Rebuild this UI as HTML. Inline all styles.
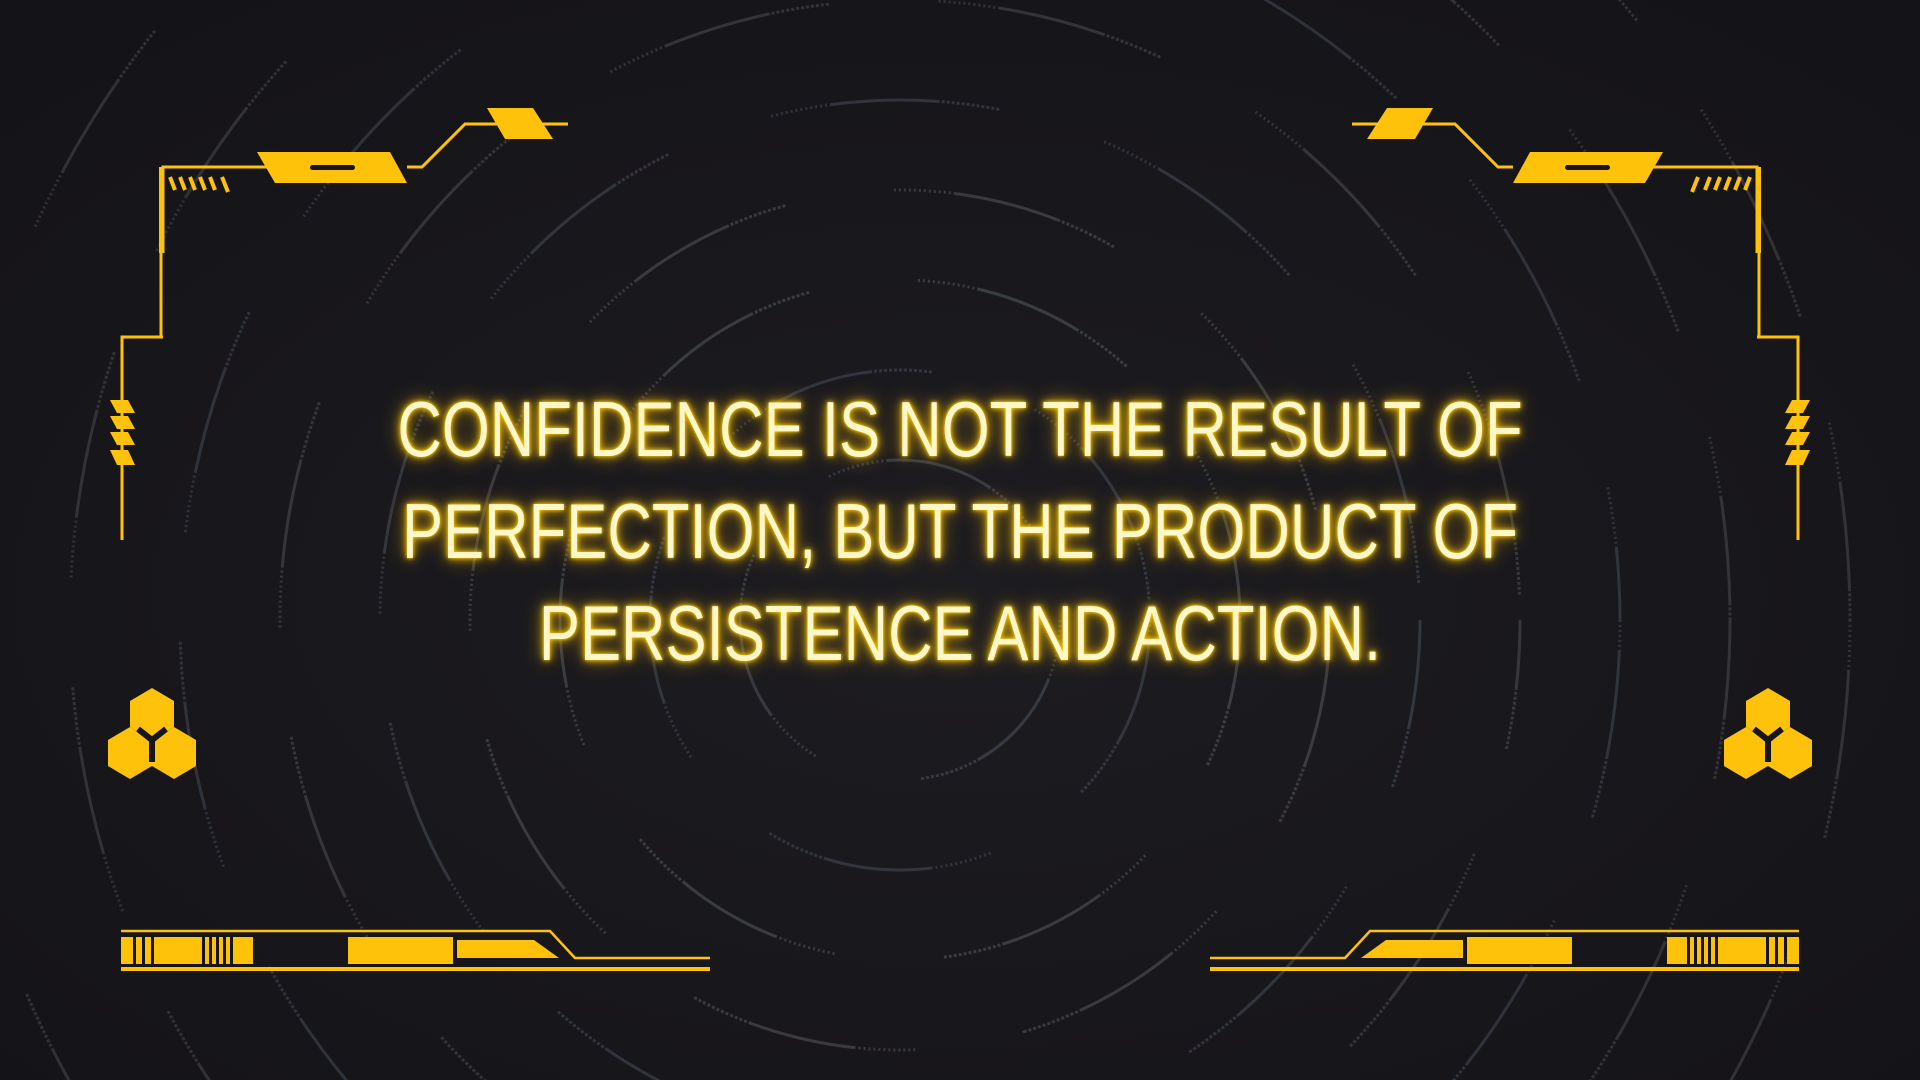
<!DOCTYPE html>
<html><head><meta charset="utf-8"><style>
html,body{margin:0;padding:0;width:1920px;height:1080px;overflow:hidden;background:#161519;position:relative;}
svg{display:block}
.q{position:absolute;left:0;top:0;width:1920px;text-align:center;font-family:"Liberation Sans",sans-serif;font-size:78px;line-height:102px;color:#fff7c8;transform:scaleX(0.79);transform-origin:960px 0;
text-shadow:0 0 4px #ffd400,0 0 10px #ffc400,0 0 22px rgba(255,190,0,.7);}
</style></head><body>
<svg width="1920" height="1080" style="position:absolute;left:0;top:0">
<defs><radialGradient id="bg" cx="50%" cy="55%" r="70%"><stop offset="0" stop-color="#1d1c20"/><stop offset="1" stop-color="#141317"/></radialGradient></defs>
<rect width="1920" height="1080" fill="url(#bg)"/>
<g fill="none" opacity="0.25" stroke-dasharray="2 3 2 3 2 3 2 3 2 3 2 3 2 3 2 3 2 3 2 3 2 3 2 3 110">
<circle cx="900" cy="620" r="160" stroke="#8a9ab0" stroke-width="3"/>
<circle cx="900" cy="620" r="250" stroke="#7a8aa0" stroke-width="3" stroke-dashoffset="40"/>
<circle cx="900" cy="620" r="340" stroke="#9aa" stroke-width="3" stroke-dashoffset="80"/>
<circle cx="900" cy="620" r="430" stroke="#a0a0a0" stroke-width="3" stroke-dashoffset="20"/>
<circle cx="900" cy="620" r="520" stroke="#8090a8" stroke-width="3" stroke-dashoffset="60"/>
<circle cx="900" cy="620" r="620" stroke="#909090" stroke-width="3" stroke-dashoffset="100"/>
<circle cx="900" cy="620" r="720" stroke="#7888a0" stroke-width="3" stroke-dashoffset="30"/>
<circle cx="900" cy="620" r="830" stroke="#888" stroke-width="3" stroke-dashoffset="70"/>
<circle cx="900" cy="620" r="950" stroke="#888" stroke-width="3" stroke-dashoffset="10"/>
</g>
<g id="L" fill="#fdc209" stroke="#fdc209">
<path d="M163 253 V167 H270 M407 167 H422 L465 124 H568 M161 337 V253 M163 337 H122 V540" fill="none" stroke-width="3"/>
<rect x="159" y="167" width="5" height="86" stroke="none"/>
<polygon points="257,152 390,152 407,183 275,183" stroke="none"/>
<rect x="310" y="165" width="45" height="5" rx="2.5" fill="#161519" stroke="none"/>
<polygon points="487,108 533,108 553,139 505,139" stroke="none"/>
<g stroke-width="4"><path d="M170 177 L175 190 M180 177 L185 190 M190 177 L195 190 M200 177 L205 190 M210 177 L215 190 M222 177 L228 192"/></g>
<g stroke="none"><polygon points="110,400 128,400 135,413 117,413"/><polygon points="110,416 128,416 135,429 117,429"/><polygon points="110,432 128,432 135,445 117,445"/><polygon points="110,450 128,450 135,465 117,465"/></g>
<g stroke="none">
<polygon points="152,688 174,701 174,727 152,740 130,727 130,701"/>
<polygon points="130,727 152,740 152,766 130,779 108,766 108,740"/>
<polygon points="174,727 196,740 196,766 174,779 152,766 152,740"/>
</g>
<path d="M138 729 L152 740 L166 729 M152 740 V762" fill="none" stroke="#161519" stroke-width="6"/>
<path d="M121 931 H550 L575 958 H710" fill="none" stroke-width="2.5"/>
<rect x="121" y="967" width="589" height="4" stroke="none"/>
<g stroke="none">
<rect x="121" y="937" width="12" height="27"/><rect x="136" y="937" width="6" height="27"/><rect x="145" y="937" width="6" height="27"/>
<rect x="154" y="937" width="48" height="27"/><rect x="205" y="937" width="4" height="27"/><rect x="212" y="937" width="4" height="27"/><rect x="219" y="937" width="4" height="27"/><rect x="226" y="937" width="4" height="27"/>
<rect x="233" y="937" width="20" height="27"/>
<rect x="348" y="937" width="105" height="27"/>
<polygon points="457,940 534,940 559,958 457,958"/>
</g>
</g>
<use href="#L" transform="translate(1920,0) scale(-1,1)"/>
</svg>
<div class="q" style="top:378px">CONFIDENCE IS NOT THE RESULT OF<br>PERFECTION, BUT THE PRODUCT OF<br>PERSISTENCE AND ACTION.</div>
</body></html>
